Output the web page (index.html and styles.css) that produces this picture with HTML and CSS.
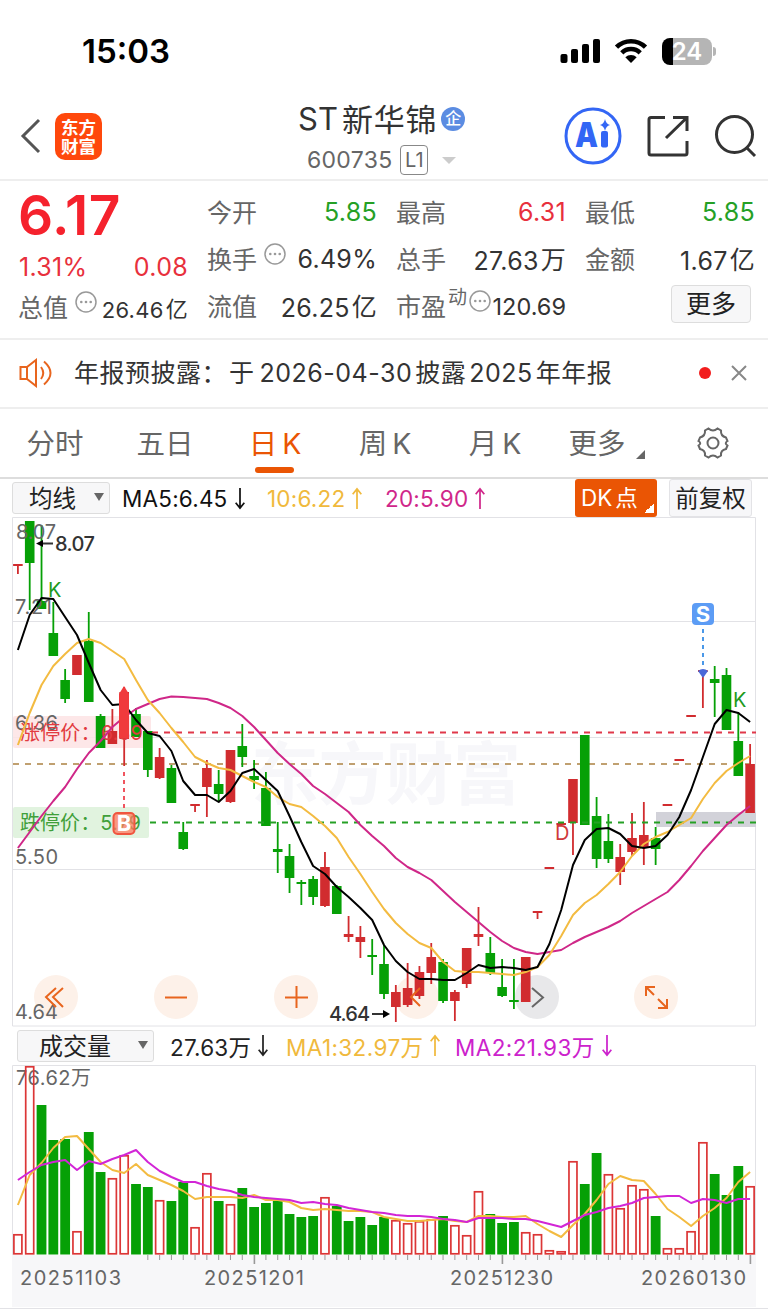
FILE: index.html
```html
<!DOCTYPE html>
<html lang="zh-CN">
<head>
    <meta charset="UTF-8">
    <title>ST新华锦 600735</title>
    <link rel="stylesheet" href="styles.css">
</head>
<body>
    <svg class="defs">
        <symbol id="down" viewBox="0 0 12 24"><path d="M6 1V22M1.5 16.5L6 22L10.5 16.5" /></symbol>
        <symbol id="up" viewBox="0 0 12 24"><path d="M6 23V2M1.5 7.5L6 2L10.5 7.5" /></symbol>
        <symbol id="dots" viewBox="0 0 22 22">
            <circle cx="11" cy="11" r="10" fill="none" stroke="#999" stroke-width="1.5" />
            <circle cx="6.3" cy="11" r="1.3" fill="#999" />
            <circle cx="11" cy="11" r="1.3" fill="#999" />
            <circle cx="15.7" cy="11" r="1.3" fill="#999" />
        </symbol>
    </svg>

    <div class="status">
        <span class="time">15:03</span>
        <svg class="signal" width="40" height="26" viewBox="0 0 40 26">
            <rect x="0.500" y="16" width="7" height="9" rx="2" />
            <rect x="11" y="11" width="7" height="14" rx="2" />
            <rect x="22" y="6" width="7" height="19" rx="2" />
            <rect x="33" y="1" width="7" height="24" rx="2" />
        </svg>
        <svg class="wifi" width="34" height="26" viewBox="0 0 34 26">
            <path d="M2.500 9.200A20.500 20.500 0 0 1 31.500 9.200M7.800 14.800A13 13 0 0 1 26.200 14.800" fill="none" stroke="#000" stroke-width="4.600" />
            <path d="M17 25L11.300 19.200A8.200 8.200 0 0 1 22.700 19.200Z" />
        </svg>
        <div class="battery"><span>24</span></div>
        <i class="nub"></i>
    </div>

    <div class="header">
        <svg class="back" width="22" height="36" viewBox="0 0 22 36"><path d="M19 2L3 18L19 34" /></svg>
        <div class="logo">东方<br>财富</div>
        <div class="title">
            <div class="name">ST<b>新华锦</b><span class="qi">企</span></div>
            <div class="code">600735<span class="l1">L1</span><i class="caret"></i></div>
        </div>
        <svg class="ai" width="58" height="58" viewBox="0 0 58 58">
            <circle cx="29" cy="29" r="27" fill="none" stroke="#3366f5" stroke-width="3" />
            <text x="11" y="40" textLength="23" lengthAdjust="spacingAndGlyphs">A</text>
            <rect x="37" y="24" width="7" height="16.500" rx="2" fill="#3366f5" />
            <path d="M41 12Q42 17 46 18Q42 19 41 24Q40 19 36 18Q40 17 41 12Z" fill="#3366f5" />
        </svg>
        <svg class="share" width="44" height="44" viewBox="0 0 44 44">
            <path d="M19 3.500H5Q3 3.500 3 5.500V39Q3 41 5 41H39Q41 41 41 39V27M27 3.500H41V17M41 3.500L20 24" />
        </svg>
        <svg class="search" width="44" height="44" viewBox="0 0 44 44">
            <circle cx="21.500" cy="20.500" r="18" /><path d="M33 33L42 42" />
        </svg>
    </div>

    <div class="quote">
        <div class="col">
            <div class="price">6.17</div>
            <div class="row red"><span>1.31%</span><span>0.08</span></div>
            <div class="row small"><label>总值<svg><use href="#dots" /></svg></label><span>26.46<em>亿</em></span></div>
        </div>
        <div class="col">
            <div class="row green"><label>今开</label><span>5.85</span></div>
            <div class="row"><label>换手<svg><use href="#dots" /></svg></label><span>6.49%</span></div>
            <div class="row"><label>流值</label><span>26.25<em>亿</em></span></div>
        </div>
        <div class="col">
            <div class="row red"><label>最高</label><span>6.31</span></div>
            <div class="row"><label>总手</label><span>27.63<em>万</em></span></div>
            <div class="row pe"><label>市盈<sup>动</sup><svg><use href="#dots" /></svg></label><span>120.69</span></div>
        </div>
        <div class="col">
            <div class="row green"><label>最低</label><span>5.85</span></div>
            <div class="row"><label>金额</label><span>1.67<em>亿</em></span></div>
            <div class="row"><button class="more">更多</button></div>
        </div>
    </div>

    <div class="notice">
        <svg width="34" height="30" viewBox="0 0 34 30">
            <path d="M1.500 9H8L17 2V28L8 21H1.500ZM8 9V21M22 9Q26.500 15 22 21M25 3.500Q38 15 25 26.500" />
        </svg>
        <p>年报预披露：<span>于</span><i>2026-04-30</i>披露<i>2025</i>年年报</p>
        <b class="dot"></b>
        <svg class="close" width="16" height="16" viewBox="0 0 16 16"><path d="M1 1L15 15M15 1L1 15" /></svg>
    </div>

    <div class="tabs">
        <div>分时</div>
        <div>五日</div>
        <div class="active">日 K</div>
        <div>周 K</div>
        <div>月 K</div>
        <div class="tri">更多</div>
        <div>
            <svg width="34" height="34" viewBox="0 0 34 34">
                <path d="M12.500 2.500Q17 6.500 21.500 2.500L25 4.500Q24.500 10 30 11.500L31.500 15Q28 17 31.500 19.500L30 23Q24.500 24 25 29.500L21.500 31.500Q17 27.500 12.500 31.500L9 29.500Q9.500 24 4 23L2.500 19.500Q6 17 2.500 15L4 11.500Q9.500 10 9 4.500Z" />
                <circle cx="17" cy="17" r="5.500" />
            </svg>
        </div>
    </div>

    <div class="bar">
        <div class="select">均线<i></i></div>
        <span class="ma5">MA5:6.45<svg><use href="#down" /></svg></span>
        <span class="ma10">10:6.22<svg><use href="#up" /></svg></span>
        <span class="ma20">20:5.90<svg><use href="#up" /></svg></span>
        <div class="dk">DK<b>点</b></div>
        <div class="fq">前复权</div>
    </div>

    <svg class="chart" width="768" height="510" viewBox="0 517 768 510">
        <text class="mark" x="251" y="799" textLength="270">东方财富</text>
        <path class="grid" d="M12.500 517.500H755.500V1026H12.500ZM12 621.500H756M12 737.500H756M12 869.500H756" />
        <rect x="656" y="812" width="100" height="15" fill="#d2d2d9" />
        <g class="ctrl">
            <circle cx="56" cy="997" r="22" />
            <circle cx="176" cy="997" r="22" />
            <circle cx="296" cy="997" r="22" />
            <circle cx="417" cy="997" r="22" />
            <circle class="gray" cx="537" cy="997" r="22" />
            <circle cx="656" cy="997" r="22" />
        </g>
        <rect x="13" y="716" width="138" height="32" rx="2" fill="#fde3e4" opacity="0.85" />
        <rect x="13" y="807" width="136" height="31" rx="2" fill="#e1f3df" />
        <path d="M13 764H756" class="dash" stroke="#c0a070" />
        <g id="candles"></g>
        <path d="M152 732.500H756" class="dash" stroke="#e0384a" />
        <path d="M150 822.500H756" class="dash" stroke="#25a025" />
        <g class="axis">
            <text x="16" y="539" textLength="40">8.07</text>
            <text x="15" y="614" textLength="37">7.21</text>
            <text x="15" y="730" textLength="43">6.36</text>
            <text x="15" y="864" textLength="43">5.50</text>
            <text x="15" y="1019" textLength="43">4.64</text>
        </g>
        <text class="limit" x="20" y="740" textLength="123" fill="#e23b40">涨停价：6.39</text>
        <text class="limit" x="20" y="830" textLength="121" fill="#3f9f3a">跌停价：5.79</text>
        <g id="lines"></g>
        <g class="signs">
            <path d="M119 694L124 686L129 694V738H119Z" fill="#f03a3c" />
            <path d="M124 772V810" stroke="#f0555f" stroke-width="2" stroke-dasharray="4 4" />
            <rect x="113.500" y="813" width="21" height="21" rx="4" fill="#ff7a60" fill-opacity="0.75" stroke="#f0553f" stroke-width="2" />
            <text x="124" y="831" class="badge">B</text>
            <path d="M703 629V668" stroke="#4a98e8" stroke-width="2" stroke-dasharray="4 4" />
            <path d="M698 671Q703 667 708 671L703 678Z" fill="#4a68d8" />
            <rect x="692" y="603" width="22" height="22" rx="4" fill="#5c9cf5" />
            <text x="703" y="622" class="badge">S</text>
            <text x="48" y="597" fill="#1e9a1e">K</text>
            <text x="733" y="707" fill="#1e9a1e">K</text>
            <text x="555" y="840" fill="#d0393c">D</text>
        </g>
        <g class="peak">
            <text x="55" y="551" textLength="40">8.07</text>
            <text x="329" y="1021" textLength="41">4.64</text>
            <path d="M53 543.500H40M372 1014H386" stroke="#333" stroke-width="2" />
            <path d="M36 543.500L43 540V547ZM390 1014L383 1010V1018Z" />
        </g>
        <g class="icons">
            <path d="M56 988L46 997L56 1007M63 988L53 997L63 1007" />
            <path d="M165 997.500H187M285 997.500H308M296.500 986V1008" />
            <path d="M420 988L411 997L420 1006" />
            <path d="M532 988L543 997.500L532 1007" stroke="#666" />
            <path d="M646 996V987H655M646 987L654 995M667 999V1008H658M667 1008L658 999" />
        </g>
    </svg>

    <div class="bar vol">
        <div class="select">成交量<i></i></div>
        <span class="v0">27.63万<svg><use href="#down" /></svg></span>
        <span class="v1">MA1:32.97万<svg><use href="#up" /></svg></span>
        <span class="v2">MA2:21.93万<svg><use href="#down" /></svg></span>
    </div>

    <svg class="chart" width="768" height="247" viewBox="0 1065 768 247">
        <rect x="12" y="1255" width="744" height="52" fill="#f7f7f9" />
        <path class="grid" d="M12.500 1255V1065.500H755.500V1255M0 1308.500H768" />
        <g class="axis">
            <text x="16" y="1085" textLength="75">76.62万</text>
            <text x="20" y="1285" textLength="101">20251103</text>
            <text x="204" y="1285" textLength="100">20251201</text>
            <text x="450" y="1285" textLength="103">20251230</text>
            <text x="641" y="1285" textLength="105">20260130</text>
        </g>
        <g id="volume"></g>
    </svg>

    <script src="chart.js"></script>
</body>
</html>
```
FILE: styles.css
```css
body{
    margin: 0;
    width: 768px;
    height: 1313px;
    overflow: hidden;
    background-color: #fff;
    font-family: Inter, "Noto Sans CJK SC", sans-serif;
    font-weight: 385;
    color: #333;
}
i, em{
    font-style: normal;
}
.defs{
    position: absolute;
    width: 0;
    height: 0;
}
.status{
    display: flex;
    align-items: center;
    height: 90px;
    padding: 12px 52px 0 82px;
    box-sizing: border-box;
}
.time{
    font-size: 33px;
    font-weight: 600;
    color: #000;
    flex: 1;
}
.wifi{
    margin: 0 14px;
}
.battery{
    width: 50px;
    height: 27px;
    border-radius: 8px;
    background: linear-gradient(90deg, #000 11px, #b5b5b5 11px);
    color: #fff;
    font-size: 24px;
    font-weight: 600;
    line-height: 27px;
    text-align: center;
}
.nub{
    width: 3px;
    height: 9px;
    margin-left: 1px;
    border-radius: 0 3px 3px 0;
    background-color: #b5b5b5;
}
.header{
    display: flex;
    align-items: center;
    height: 91px;
    padding: 3px 10px 0 20px;
    border-bottom: 2px solid #eee;
    box-sizing: border-box;
}
.back, .share, .search{
    fill: none;
    stroke: #333;
    stroke-width: 3;
}
.back{
    stroke: #555;
}
.logo{
    width: 47px;
    height: 47px;
    margin-left: 13px;
    border-radius: 10px;
    background-color: #ff480c;
    color: #fff;
    font-size: 17.500px;
    font-weight: 700;
    line-height: 19px;
    text-align: center;
    padding-top: 5px;
    box-sizing: border-box;
}
.title{
    margin-left: 196px;
    margin-top: 5px;
    width: 266px;
}
.name{
    display: flex;
    align-items: center;
    height: 43px;
    font-size: 31px;
}
.name b{
    font-weight: 385;
    margin-left: 4px;
    margin-top: -2px;
    letter-spacing: 0.8px;
}
.qi{
    width: 24px;
    height: 24px;
    margin-left: 4px;
    border-radius: 12px;
    background-color: #5b8ce2;
    color: #fff;
    font-size: 16px;
    font-weight: 500;
    line-height: 22px;
    text-align: center;
}
.code{
    display: flex;
    align-items: center;
    margin-left: 9px;
    height: 40px;
    font-size: 23px;
    letter-spacing: 0.3px;
    color: #666;
}
.l1{
    width: 26px;
    height: 28px;
    margin-left: 8px;
    border: 1px solid #888;
    border-radius: 4px;
    font-size: 20px;
    line-height: 28px;
    text-align: center;
}
.caret{
    margin-left: 14px;
    border: 7px solid transparent;
    border-top: 7px solid #ccc;
    border-bottom: 0;
}
.ai text{
    font-size: 34px;
    font-weight: 900;
    fill: #3366f5;
}
.share{
    margin-left: 24px;
}
.search{
    margin-left: 23px;
}
.quote{
    display: grid;
    grid-template-columns: 169px 170px 170px 170px;
    column-gap: 19px;
    height: 159px;
    padding: 7px 0 0 19px;
    border-bottom: 2px solid #eee;
    box-sizing: border-box;
    font-size: 25px;
}
.row{
    display: flex;
    align-items: center;
    justify-content: space-between;
    height: 47px;
}
.row span{
    letter-spacing: 0.3px;
}
.row em{
    position: relative;
    top: -1px;
    margin-left: 2px;
}
.row label{
    display: flex;
    align-items: center;
    margin-top: -2px;
    color: #666;
    white-space: nowrap;
}
.row label svg{
    width: 22px;
    height: 22px;
    margin: -8px 0 0 7px;
}
.price{
    height: 56px;
    line-height: 54px;
    font-size: 55px;
    font-weight: 600;
    letter-spacing: 0.5px;
    color: #f5222d;
    margin-left: -1px;
}
.price + .row{
    height: 45px;
}
.price + .row + .row{
    height: 38px;
}
.row.small label{
    margin-left: -1px;
    margin-top: -5px;
}
.small span{
    font-size: 22px;
}
.row.pe label svg{
    margin-left: 2px;
}
.pe sup{
    font-size: 19px;
    line-height: 20px;
    margin-top: -13px;
    margin-left: 2px;
}
.row.pe span{
    font-size: 23.500px;
    margin-left: -5px;
    padding-top: 2px;
    letter-spacing: 0;
}
.red, .red span{
    color: #e8303c;
}
.green span{
    color: #25a025;
}
.more{
    width: 80px;
    height: 38px;
    margin: -4px 4px 0 auto;
    padding: 0;
    border: 1px solid #ddd;
    border-radius: 4px;
    background-color: #f7f7f8;
    font: 385 25px/34px Inter, "Noto Sans CJK SC", sans-serif;
    color: #222;
}
.notice{
    display: flex;
    align-items: center;
    height: 69px;
    padding: 0 21px 2px 19px;
    border-bottom: 2px solid #eee;
    box-sizing: border-box;
    font-size: 25px;
}
.notice svg{
    fill: none;
    stroke: #e8651e;
    stroke-width: 2;
}
.notice p{
    flex: 1;
    margin: -3px 0 0 21px;
    letter-spacing: 0.5px;
    white-space: nowrap;
}
.notice p span{
    margin: 0 2px;
}
.notice p i{
    margin: 0 3px;
}
.dot{
    width: 12px;
    height: 12px;
    border-radius: 6px;
    background-color: #f21d1d;
    margin-right: 20px;
}
.notice .close{
    stroke: #888;
}
.tabs{
    display: grid;
    grid-template-columns: repeat(6, 110px) 106px;
    height: 70px;
    border-bottom: 2px solid #ddd;
    box-sizing: border-box;
    font-size: 28.500px;
    color: #666;
    text-align: center;
    line-height: 70px;
}
.tabs div{
    position: relative;
    height: 68px;
    word-spacing: -3px;
}
.tabs svg{
    display: block;
    margin: 17px auto 0;
    fill: none;
    stroke: #666;
    stroke-width: 2;
}
.tabs .active{
    color: #ea5504;
}
.active::after{
    content: "";
    position: absolute;
    left: 35px;
    bottom: 4px;
    width: 39px;
    height: 6px;
    border-radius: 3px;
    background-color: #ea5504;
}
.tabs .tri{
    padding-right: 16px;
}
.tri::after{
    content: "";
    position: absolute;
    left: 86px;
    top: 41px;
    border-bottom: 9px solid #666;
    border-left: 9px solid transparent;
}
.bar{
    display: flex;
    align-items: center;
    height: 38px;
    padding-left: 12px;
    box-sizing: border-box;
    font-size: 22.500px;
    white-space: nowrap;
}
.select{
    display: flex;
    align-items: center;
    justify-content: space-between;
    width: 98px;
    height: 32px;
    padding: 0 5px 2px 16px;
    border: 1px solid #ddd;
    border-radius: 3px;
    background-color: #f7f7f8;
    box-sizing: border-box;
    font-size: 23.500px;
    color: #222;
}
.select i{
    border: 5px solid transparent;
    border-top: 8px solid #666;
    border-bottom: 0;
}
.bar span{
    display: flex;
    align-items: center;
    letter-spacing: 0.2px;
}
.bar span svg{
    width: 12px;
    height: 23px;
    fill: none;
    stroke: currentColor;
    stroke-width: 1.800;
    margin-left: 6px;
    flex: none;
}
.ma5{
    width: 145px;
    margin-left: 12px;
    color: #111;
}
.ma10{
    width: 118px;
    color: #f0b93c;
}
.ma20{
    width: 190px;
    color: #d0278a;
}
.dk{
    width: 82px;
    height: 38px;
    border-radius: 3px;
    background: linear-gradient(135deg, transparent 50%, #fff 50%) 69px 24px / 10px 10px no-repeat, #ea5504;
    color: #fff;
    line-height: 38px;
    padding-left: 6px;
    box-sizing: border-box;
}
.dk b{
    font-weight: 385;
    margin-left: 3px;
}
.fq{
    width: 83px;
    height: 38px;
    margin-left: 12px;
    border: 1px solid #e3e3e6;
    border-radius: 3px;
    background-color: #f7f7f9;
    box-sizing: border-box;
    text-align: center;
    font-size: 23.500px;
    line-height: 37px;
    color: #222;
}
.chart{
    display: block;
}
.chart text{
    font-size: 20px;
}
.grid{
    fill: none;
    stroke: #e2e2e6;
}
.chart .mark{
    font-size: 68px;
    font-weight: 700;
    fill: #f7f7fa;
}
.chart .axis text{
    fill: #666;
}
.dash{
    stroke-width: 2;
    stroke-dasharray: 6 6;
}
.chart .badge{
    font-size: 22px;
    font-weight: 700;
    fill: #fff;
    text-anchor: middle;
}
.peak text{
    font-weight: 500;
    fill: #333;
}
.ctrl{
    fill: #fdf1e9;
}
.ctrl .gray{
    fill: #e8e8ea;
}
.icons{
    fill: none;
    stroke: #e8651e;
    stroke-width: 2;
}
#lines, #volume .line{
    fill: none;
    stroke-width: 2;
    stroke-linejoin: round;
}
.vol{
    padding-left: 17px;
    padding-bottom: 1px;
}
.vol .select{
    width: 137px;
    padding-left: 21px;
    font-size: 24px;
}
.v0{
    margin-left: 16px;
    width: 116px;
    color: #222;
}
.bar .v1, .bar .v2{
    letter-spacing: 0.4px;
}
.v1{
    width: 169px;
    color: #f0b93c;
}
.v2{
    color: #cc22cc;
}
```
FILE: chart.js
```js
const RED = "#d12c2f";
const GREEN = "#06a006";
const x = i => 17.9 + i * 11.81;

// colour, high, body top, body bottom, low
const candles = [
    ["r",564,564,566,574],["g",521,521,563,610],["g",525,601,609,609],["g",602,633,656,656],["g",669,680,699,703],
    ["r",655,655,675,675],["g",612,641,702,702],["g",714,716,748,748],["r",709,731,744,744],["r",687,692,739,766],
    ["g",708,714,737,737],["g",731,731,770,777],["r",748,757,778,779],["g",765,768,803,803],["g",822,832,849,850],
    ["r",804,804,806,812],["r",760,768,787,817],["g",770,784,794,801],["r",750,750,802,803],["g",724,746,757,767],
    ["g",760,776,780,789],["g",772,788,826,826],["g",822,849,852,873],["g",844,856,878,893],["g",880,882,884,905],
    ["g",876,879,897,905],["r",852,867,906,907],["g",885,886,914,914],["r",916,934,937,942],["r",926,937,942,958],
    ["g",939,955,957,975],["g",945,964,994,999],["r",985,992,1007,1022],["r",963,988,1005,1007],["r",966,972,996,999],
    ["r",943,957,973,984],["g",959,962,1001,1003],["r",990,992,1001,1021],["r",948,948,984,988],["r",907,934,937,946],
    ["g",937,953,973,975],["g",959,987,996,997],["g",959,1000,1002,1009],["r",957,957,1002,1002],["r",911,911,913,919],
    ["r",867,867,869,869],["r",823,823,825,825],["r",779,779,823,855],["g",735,735,825,825],["g",797,816,859,868],
    ["g",814,841,859,863],["r",844,857,872,885],["r",813,838,852,856],["r",802,835,847,865],["g",827,838,849,865],
    ["r",804,804,806,806],["r",759,759,761,761],["r",715,715,717,717],["r",670,670,672,708],["g",666,679,683,717],
    ["g",668,675,730,730],["g",712,741,776,776],["r",744,764,813,813]
];
const ma5 = [650,615,598,599,617,635,663,690,705,704,720,733,736,751,781,795,795,802,791,773,769,780,791,816,842,866,874,887,897,908,920,945,961,972,979,979,980,980,973,965,968,967,968,970,967,944,910,865,840,829,828,834,846,848,846,835,817,790,757,724,710,713,722];
const ma10 = [745,713,685,666,654,643,639,643,651,659,680,700,713,728,742,757,763,768,770,776,782,787,797,804,807,816,826,838,857,874,892,909,923,934,943,948,962,971,972,972,973,974,975,972,967,955,936,915,903,895,884,872,856,844,837,832,825,818,799,783,771,763,756];
const ma20 = [848,832,816,801,787,769,753,741,727,717,709,704,699,696.5,697,698,699,703,708,716,727,740,753,764,774,786,794,803,812,825,836,846,858,867,873,880,891,902,912,922,932,941,948,952,954,952,950,943,937,932,927,921,913,906,899,892,880,866,851,838,825,815,806];

// top of each volume bar, coloured on its own
const vols = [1234,1066,1105,1140,1139,1231,1132,1172,1178,1155,1184,1187,1200,1201,1182,1227,1173,1201,1204,1188,1207,1203,1201,1214,1217,1216,1197,1206,1221,1217,1225,1217,1220,1223,1221,1219,1216,1225,1235,1191,1214,1223,1222,1232,1234,1250,1251,1161,1184,1153,1174,1208,1185,1189,1216,1248,1248,1231,1142,1174,1195,1166,1186];
const volColor = "rrgggrggrrggrggrrgrgggggggrgggggrrrrgrrrgggrrrrrggrrrrgrrrrgggr";
const vma1 = [1205,1175,1163,1148,1137,1136,1149,1162,1170,1173,1164,1175,1180,1185,1191,1199,1197,1197,1197,1198,1195,1200,1200,1202,1208,1210,1209,1210,1211,1211,1212,1217,1219,1221,1221,1220,1219,1221,1222,1216,1216,1217,1217,1216,1224,1231,1237,1225,1214,1200,1184,1176,1180,1181,1194,1209,1217,1226,1216,1208,1198,1182,1172];
const vma2 = [1180,1172,1165,1162,1160,1170,1161,1164,1159,1155,1150,1162,1171,1177,1182,1182,1186,1189,1191,1195,1197,1198,1199,1200,1203,1202,1204,1205,1208,1210,1212,1213,1215,1216,1216,1217,1219,1220,1222,1218,1218,1218,1219,1219,1221,1224,1227,1221,1215,1212,1208,1206,1203,1198,1197,1196,1196,1203,1199,1200,1203,1199,1199];

function line(data, color) {
    const pts = data.map((y, i) => x(i).toFixed(1) + "," + y).join(" ");
    return `<polyline class="line" points="${pts}" stroke="${color}" />`;
}

let html = "";
candles.forEach(([c, high, top, bottom, low], i) => {
    const color = c == "r" ? RED : GREEN;
    html += `<rect x="${x(i) - 0.9}" y="${high}" width="1.8" height="${low - high}" fill="${color}" />`;
    html += `<rect x="${x(i) - 4.8}" y="${top}" width="9.6" height="${bottom - top}" fill="${color}" />`;
});
document.getElementById("candles").innerHTML = html;
document.getElementById("lines").innerHTML =
    line(ma20, "#cf2788") + line(ma10, "#f3bb41") + line(ma5, "#000");

html = "";
vols.forEach((top, i) => {
    if (volColor[i] == "g") {
        html += `<rect x="${x(i) - 4.9}" y="${top}" width="9.8" height="${1254.5 - top}" fill="${GREEN}" />`;
    } else {
        html += `<rect x="${x(i) - 4}" y="${top + 0.8}" width="8" height="${Math.max(1253 - top, 1)}" fill="none" stroke="#dc3636" stroke-width="1.7" />`;
    }
    if (i > 10) {
        const long = i == 20 || i == 41 || i == 62;
        html += `<rect x="${x(i) - 0.5}" y="1255" width="${long ? 1.6 : 1}" height="${long ? 9 : 5}" fill="#999" />`;
    }
});
html += line(vma1, "#f3bb41") + line(vma2, "#d225d6");
document.getElementById("volume").innerHTML = html;
```
